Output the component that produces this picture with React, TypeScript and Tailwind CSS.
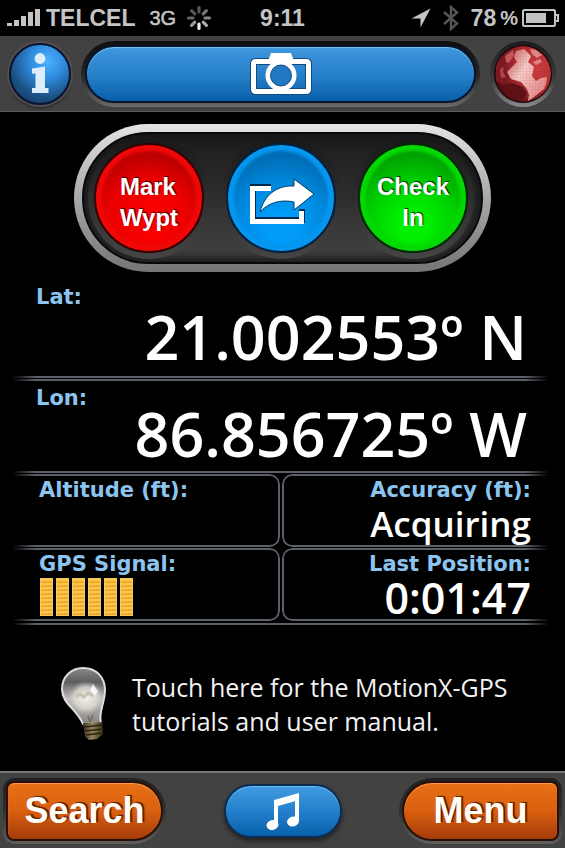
import type { ReactNode } from "react"

const helvetica = "font-['Liberation_Sans',Arial,sans-serif]"

function StatusBar() {
  return (
    <div className={`grid h-9 grid-cols-[1fr_auto_1fr] items-center bg-black px-1.5 text-[#c4c4c4] ${helvetica}`}>
      <div className="flex items-center">
        <svg width="36" height="20" viewBox="0 0 36 20" fill="currentColor" aria-label="Signal strength">
          <rect x="1" y="15" width="5" height="3" />
          <rect x="8" y="12" width="5" height="6" />
          <rect x="15" y="8" width="5" height="10" />
          <rect x="22" y="4" width="5" height="14" />
          <rect x="29" y="1" width="5" height="17" />
        </svg>
        <span className="ml-1 text-[23px] font-bold leading-9">TELCEL</span>
        <span className="ml-3.5 text-xl leading-9 [-webkit-text-stroke:0.5px_currentColor]">3G</span>
        <svg className="ml-2.5" width="26" height="26" viewBox="-13 -13 26 26" aria-label="Loading">
          {["#555", "#777", "#888", "#aaa", "#eee", "#999", "#666", "#555"].map((color, i) => (
            <line key={i} x1="0" y1="-6" x2="0" y2="-10.5" stroke={color} strokeWidth="3.2" strokeLinecap="round" transform={`rotate(${i * 45})`} />
          ))}
        </svg>
      </div>
      <span className="text-[23px] font-bold leading-9">9:11</span>
      <div className="flex items-center justify-end">
        <svg width="20" height="20" viewBox="0 0 20 20" fill="currentColor" aria-label="Location">
          <path d="M19.5 0.5 0.5 10.5H9.5V19.5Z" />
        </svg>
        <svg className="ml-3" width="16" height="26" viewBox="0 0 16 26" fill="none" stroke="#555" strokeWidth="2.4" aria-label="Bluetooth">
          <path d="M1 7 14 18.500 8 24V2L14 7.500 1 19" />
        </svg>
        <span className="ml-3 text-[23px] font-bold leading-9">78</span>
        <span className="ml-1 text-xl font-bold leading-9">%</span>
        <svg className="ml-1" width="37" height="18" viewBox="0 0 37 18" fill="none" aria-label="Battery">
          <rect x="1" y="1" width="32" height="16" rx="1.500" stroke="currentColor" strokeWidth="2" />
          <rect x="4" y="4" width="20" height="10" fill="currentColor" />
          <path d="M34 6h2v6h-2" stroke="currentColor" strokeWidth="2" />
        </svg>
      </div>
    </div>
  )
}

function Globe() {
  return (
    <svg width="66" height="66" viewBox="0 0 66 66">
      <defs>
        <linearGradient id="globe-rim" x1="0" y1="0" x2="0" y2="1">
          <stop offset="0" stopColor="#1c1c1c" />
          <stop offset="0.6" stopColor="#3c3c3c" />
          <stop offset="1" stopColor="#8c8c8c" />
        </linearGradient>
        <radialGradient id="globe-sea" cx="0.75" cy="0.38" r="0.75">
          <stop offset="0" stopColor="#cb3f42" />
          <stop offset="0.5" stopColor="#b32d33" />
          <stop offset="1" stopColor="#4e0e13" />
        </radialGradient>
        <linearGradient id="globe-land" x1="0" y1="0" x2="1" y2="0.8">
          <stop offset="0" stopColor="#c04d50" />
          <stop offset="0.45" stopColor="#f5cbc6" />
          <stop offset="1" stopColor="#e2827f" />
        </linearGradient>
        <pattern id="globe-grid" width="3" height="3" patternUnits="userSpaceOnUse">
          <path d="M0 0H3M0 0V3" stroke="#8d1c22" strokeWidth="0.6" opacity="0.22" />
        </pattern>
        <clipPath id="globe-clip"><circle cx="33" cy="33" r="28" /></clipPath>
      </defs>
      <circle cx="33" cy="33" r="33" fill="url(#globe-rim)" />
      <circle cx="33" cy="33" r="29" fill="#170506" />
      <g clipPath="url(#globe-clip)">
        <circle cx="33" cy="33" r="28" fill="url(#globe-sea)" />
        <path d="M26 10 34 8 41 15 38 21 44 26 42 35 46 40 51 37 57 36 56 43 54 48 44 56 38 60 39 54 37 48 31 41 21 38 17 31 22 26 27 21 24 16Z" fill="url(#globe-land)" />
        <path d="M40 8 46 9 52 14 47 17 42 13ZM43 21 50 18 52 21 46 24Z" fill="#e08a88" />
        <path d="M6 20 13 15 19 18 15 25 18 34 13 44 6 40Z" fill="#7b1a20" />
        <path d="M10 28 14 26 13 31 16 36 11 37Z" fill="#b5474b" />
        <path d="M12 45 22 42 33 46 37 53 34 58 26 60 17 54Z" fill="#5c1016" />
        <path d="M15 15 23 9 24 14 19 22 16 21Z" fill="#c4585b" />
        <circle cx="33" cy="33" r="28" fill="url(#globe-grid)" />
      </g>
    </svg>
  )
}

function TopBar() {
  return (
    <header className="flex h-[76px] items-center gap-2.5 border-b border-[#5c5c5c] bg-[#424242] px-[9px]">
      <button
        type="button"
        aria-label="Information"
        className="size-[62px] shrink-0 rounded-full border-2 border-[#0a1430] bg-[radial-gradient(circle_at_62%_28%,#4cb4ff_0%,#2f8add_32%,#1a5284_65%,#11304e_100%)] shadow-[0_0_0_2px_#505050,0_3px_3px_#222]"
      >
        <svg className="mx-auto" width="20" height="42" viewBox="0 0 20 42" fill="#dceefb">
          <circle cx="10" cy="5.500" r="5.400" />
          <path d="M2 15.500 15 13.500V35H18.500V40H2V35H5.500V20.500H2Z" />
        </svg>
      </button>
      <div className="flex-1 rounded-full bg-linear-to-b from-[#101010] via-[#242424] to-[#6a6a6a] p-1">
        <button
          type="button"
          aria-label="Camera"
          className="flex h-[58px] w-full items-center justify-center rounded-full border-2 border-[#05152b] bg-linear-to-b from-[#3f97dc] via-[#2681cb] to-[#0660a9] shadow-[inset_0_1px_1px_#7fc6f5]"
        >
          <svg width="62" height="42" viewBox="0 0 62 42" fill="none">
            <rect x="3.500" y="8.500" width="55" height="30" rx="2" stroke="#124a7c" strokeWidth="7" />
            <path d="M18 8 21 0H41L44 8Z" fill="#fff" />
            <rect x="3.500" y="8.500" width="55" height="30" rx="2" stroke="#fff" strokeWidth="5" />
            <circle cx="31" cy="22.500" r="13" fill="#1f78c1" stroke="#fff" strokeWidth="5" />
            <circle cx="31" cy="22.500" r="10.500" stroke="#124a7c" />
          </svg>
        </button>
      </div>
      <button type="button" aria-label="Globe" className="shrink-0">
        <Globe />
      </button>
    </header>
  )
}

function RoundButton({ label, className, children }: { label?: string; className: string; children: ReactNode }) {
  return (
    <div className="rounded-full bg-linear-to-b from-[#181818] to-[#454545] p-1.5">
      <button
        type="button"
        aria-label={label}
        className={`flex size-[110px] items-center justify-center rounded-full border-2 pt-2 text-2xl/[31px] font-bold text-white [text-shadow:1px_-1px_1px_rgba(0,0,0,0.8)] ${helvetica} ${className}`}
      >
        {children}
      </button>
    </div>
  )
}

function Actions() {
  return (
    <div className="mx-auto mt-3 rounded-full bg-linear-to-b from-[#e4e4e4] via-[#a8a8a8] to-[#757575] p-2">
      <div className="flex items-center gap-2.5 rounded-full border-2 border-[#080808] bg-linear-to-b from-[#1c1c1c] to-[#424242] py-[3px] pl-1 pr-[7px] shadow-[inset_0_0_10px_4px_#161616]">
        <RoundButton className="border-[#350000] bg-[radial-gradient(circle_at_50%_70%,#fa0000_15%,#e90000_45%,#b80000_72%)] shadow-[inset_0_0_3px_6px_#f00808]">
          <span className="text-left">Mark<br />Wypt</span>
        </RoundButton>
        <RoundButton label="Share" className="border-[#00203b] bg-[radial-gradient(circle_at_50%_78%,#009cf8_15%,#0089de_45%,#0062a5_85%)] shadow-[inset_0_0_3px_6px_#0796ef]">
          <svg width="68" height="48" viewBox="0 0 68 48" fill="none">
            <path d="M23 10H5V43H54V32" stroke="#002b4d" strokeWidth="6" transform="translate(1 -1)" />
            <path d="M24 10.500H5.500V43.500H54.500V33" stroke="#fff" strokeWidth="5" />
            <path d="M13 34C17 18 29 7 47 8V1L67 16 47 32V24C33 21 21 25 13 34Z" fill="#fff" stroke="#003c68" strokeWidth="1" />
          </svg>
        </RoundButton>
        <RoundButton className="border-[#002800] bg-[radial-gradient(circle_at_50%_75%,#00f000_15%,#00d000_45%,#008d00_85%)] shadow-[inset_0_0_3px_6px_#04d804]">
          <span>Check<br />In</span>
        </RoundButton>
      </div>
    </div>
  )
}

function Label({ children }: { children: ReactNode }) {
  return <dt className="font-['DejaVu_Sans',Verdana,sans-serif] text-[21px] font-bold leading-5 text-[#8cc4f0]">{children}</dt>
}

const valueFont = "font-['Open_Sans','Noto_Sans',sans-serif] font-semibold text-right text-white"

function Rule() {
  return <div className="h-0.5 bg-[linear-gradient(to_right,transparent,#5c6068_24px,#5c6068_calc(100%_-_24px),transparent)]" />
}

function Cell({ side, children }: { side: "left" | "right"; children: ReactNode }) {
  const frame =
    side === "left"
      ? "rounded-r-[10px] border-r-2 [mask-image:linear-gradient(to_right,transparent,#000_24px)]"
      : "rounded-l-[10px] border-l-2 [mask-image:linear-gradient(to_left,transparent,#000_24px)]"
  return (
    <div className="grid">
      <div className={`col-start-1 row-start-1 border-y-2 border-[#5c6068] ${frame}`} />
      <div className={`col-start-1 row-start-1 pt-1.5 ${side === "left" ? "pl-[27px]" : "pr-[18px] text-right"}`}>{children}</div>
    </div>
  )
}

function SignalBars({ count }: { count: number }) {
  return (
    <dd className="mt-1 flex h-[38px] gap-[3px] pl-px" aria-label="GPS signal level">
      {Array.from({ length: count }, (_, i) => (
        <span
          key={i}
          className="w-[13px] border border-[#f7c860] bg-[repeating-linear-gradient(to_bottom,#ffc64a_0px,#ffc64a_2px,#e39b25_3px,#f2b03a_4px)]"
        />
      ))}
    </dd>
  )
}

function Readout() {
  return (
    <dl className="ml-3 mr-4 mt-[9px]">
      <div className="pt-1.5 pb-3.5 pl-6 pr-[22px]">
        <Label>Lat:</Label>
        <dd className={`mt-1 text-[61px] leading-[51px] ${valueFont}`}>21.002553º N</dd>
      </div>
      <div className="flex flex-col gap-px">
        <Rule />
        <Rule />
      </div>
      <div className="pt-[7px] pb-3 pl-6 pr-[22px]">
        <Label>Lon:</Label>
        <dd className={`text-[61px] leading-[51px] ${valueFont}`}>86.856725º W</dd>
      </div>
      <Rule />
      <div className="mt-px mb-0.5 grid grid-cols-2 gap-x-0.5 gap-y-px">
        <Cell side="left">
          <Label>Altitude (ft):</Label>
        </Cell>
        <Cell side="right">
          <Label>Accuracy (ft):</Label>
          <dd className={`text-[35px] leading-[47px] ${valueFont}`}>Acquiring</dd>
        </Cell>
        <Cell side="left">
          <Label>GPS Signal:</Label>
          <SignalBars count={6} />
        </Cell>
        <Cell side="right">
          <Label>Last Position:</Label>
          <dd className={`text-[43px] leading-[47px] ${valueFont}`}>0:01:47</dd>
        </Cell>
      </div>
      <Rule />
    </dl>
  )
}

function Bulb() {
  return (
    <svg className="shrink-0" width="48" height="76" viewBox="0 0 48 76">
      <defs>
        <linearGradient id="bulb-glass" x1="0" y1="0" x2="0" y2="1">
          <stop offset="0" stopColor="#8a8a8a" />
          <stop offset="0.25" stopColor="#5e5e5e" />
          <stop offset="0.55" stopColor="#c4c2bf" />
          <stop offset="1" stopColor="#85837f" />
        </linearGradient>
        <radialGradient id="bulb-glow">
          <stop offset="0" stopColor="#f4f1ea" />
          <stop offset="0.65" stopColor="#dedad2" stopOpacity="0.8" />
          <stop offset="1" stopColor="#bbb" stopOpacity="0" />
        </radialGradient>
        <linearGradient id="bulb-base">
          <stop offset="0" stopColor="#3d321e" />
          <stop offset="0.45" stopColor="#94815a" />
          <stop offset="1" stopColor="#3b2f1b" />
        </linearGradient>
      </defs>
      <path d="M23 2C11 2 2 11 2 23 2 38 17 43 23 58L41 57C38 46 45 37 45 24 45 11 36 2 23 2Z" fill="url(#bulb-glass)" stroke="#dedede" strokeWidth="2" />
      <ellipse cx="26" cy="32" rx="18" ry="17" fill="url(#bulb-glow)" />
      <path d="M33 18 38 25 35 30 30 24Z" fill="#fff" opacity="0.8" />
      <path d="M16 31 20 28 24 31 28 27 33 30" fill="none" stroke="#c9c1b2" strokeWidth="3" />
      <path d="M28 50 30 56 33 49" fill="none" stroke="#746a5a" strokeWidth="1.500" />
      <path d="M23 57 42 56 43 68 37 73 29 74 25 70Z" fill="url(#bulb-base)" />
      <path d="M24 61 42 59M25 65 43 63M26 69 42 67" stroke="#2c2312" strokeWidth="1.500" />
    </svg>
  )
}

function TutorialLink() {
  return (
    <a href="#tutorials" className="flex flex-1 items-center gap-6 pt-3 pl-[60px] pr-10 font-['Open_Sans','Noto_Sans',sans-serif] text-[25px] leading-[34px] text-[#f2f2f2]">
      <Bulb />
      <span>Touch here for the MotionX-GPS tutorials and user manual.</span>
    </a>
  )
}

const navButton = `h-[60px] w-[157px] border-2 border-[#291006] bg-linear-to-b from-[#e87016] via-[#d9600f] to-[#a63c0b] text-4xl font-bold text-[#fffdf6] shadow-[inset_0_1px_1px_#ff9c4f] [text-shadow:2px_-1px_1px_rgba(50,15,0,0.8)] ${helvetica}`

function BottomBar() {
  return (
    <footer className="flex h-[77px] items-center justify-between border-t-2 border-[#777] bg-[#424242] px-[3px]">
      <div className="rounded-l-xl rounded-r-[34px] bg-linear-to-b from-[#202020] via-[#303030] to-[#5e5e5e] p-[3px]">
        <button type="button" className={`rounded-l-lg rounded-r-[30px] ${navButton}`}>Search</button>
      </div>
      <button
        type="button"
        aria-label="Music"
        className="flex h-[54px] w-[118px] items-center justify-center rounded-full border-2 border-[#0b2c50] bg-linear-to-b from-[#409be1] via-[#2480cc] to-[#0660a9] shadow-[0_3px_4px_#222,inset_0_1px_1px_#67bff5]"
      >
        <svg width="34" height="40" viewBox="0 0 34 40" fill="#fff">
          <path d="M8 9 33 2V9L12 15V33H8Z" />
          <path d="M29 4H33V30H29Z" />
          <ellipse cx="6.500" cy="34" rx="6" ry="5" transform="rotate(-15 6.500 34)" />
          <ellipse cx="27" cy="30.500" rx="6" ry="5" transform="rotate(-15 27 30.500)" />
        </svg>
      </button>
      <div className="rounded-l-[34px] rounded-r-xl bg-linear-to-b from-[#202020] via-[#303030] to-[#5e5e5e] p-[3px]">
        <button type="button" className={`rounded-l-[30px] rounded-r-lg ${navButton}`}>Menu</button>
      </div>
    </footer>
  )
}

export default function App() {
  return (
    <div className="flex min-h-screen flex-col bg-black">
      <StatusBar />
      <TopBar />
      <Actions />
      <Readout />
      <TutorialLink />
      <BottomBar />
    </div>
  )
}
